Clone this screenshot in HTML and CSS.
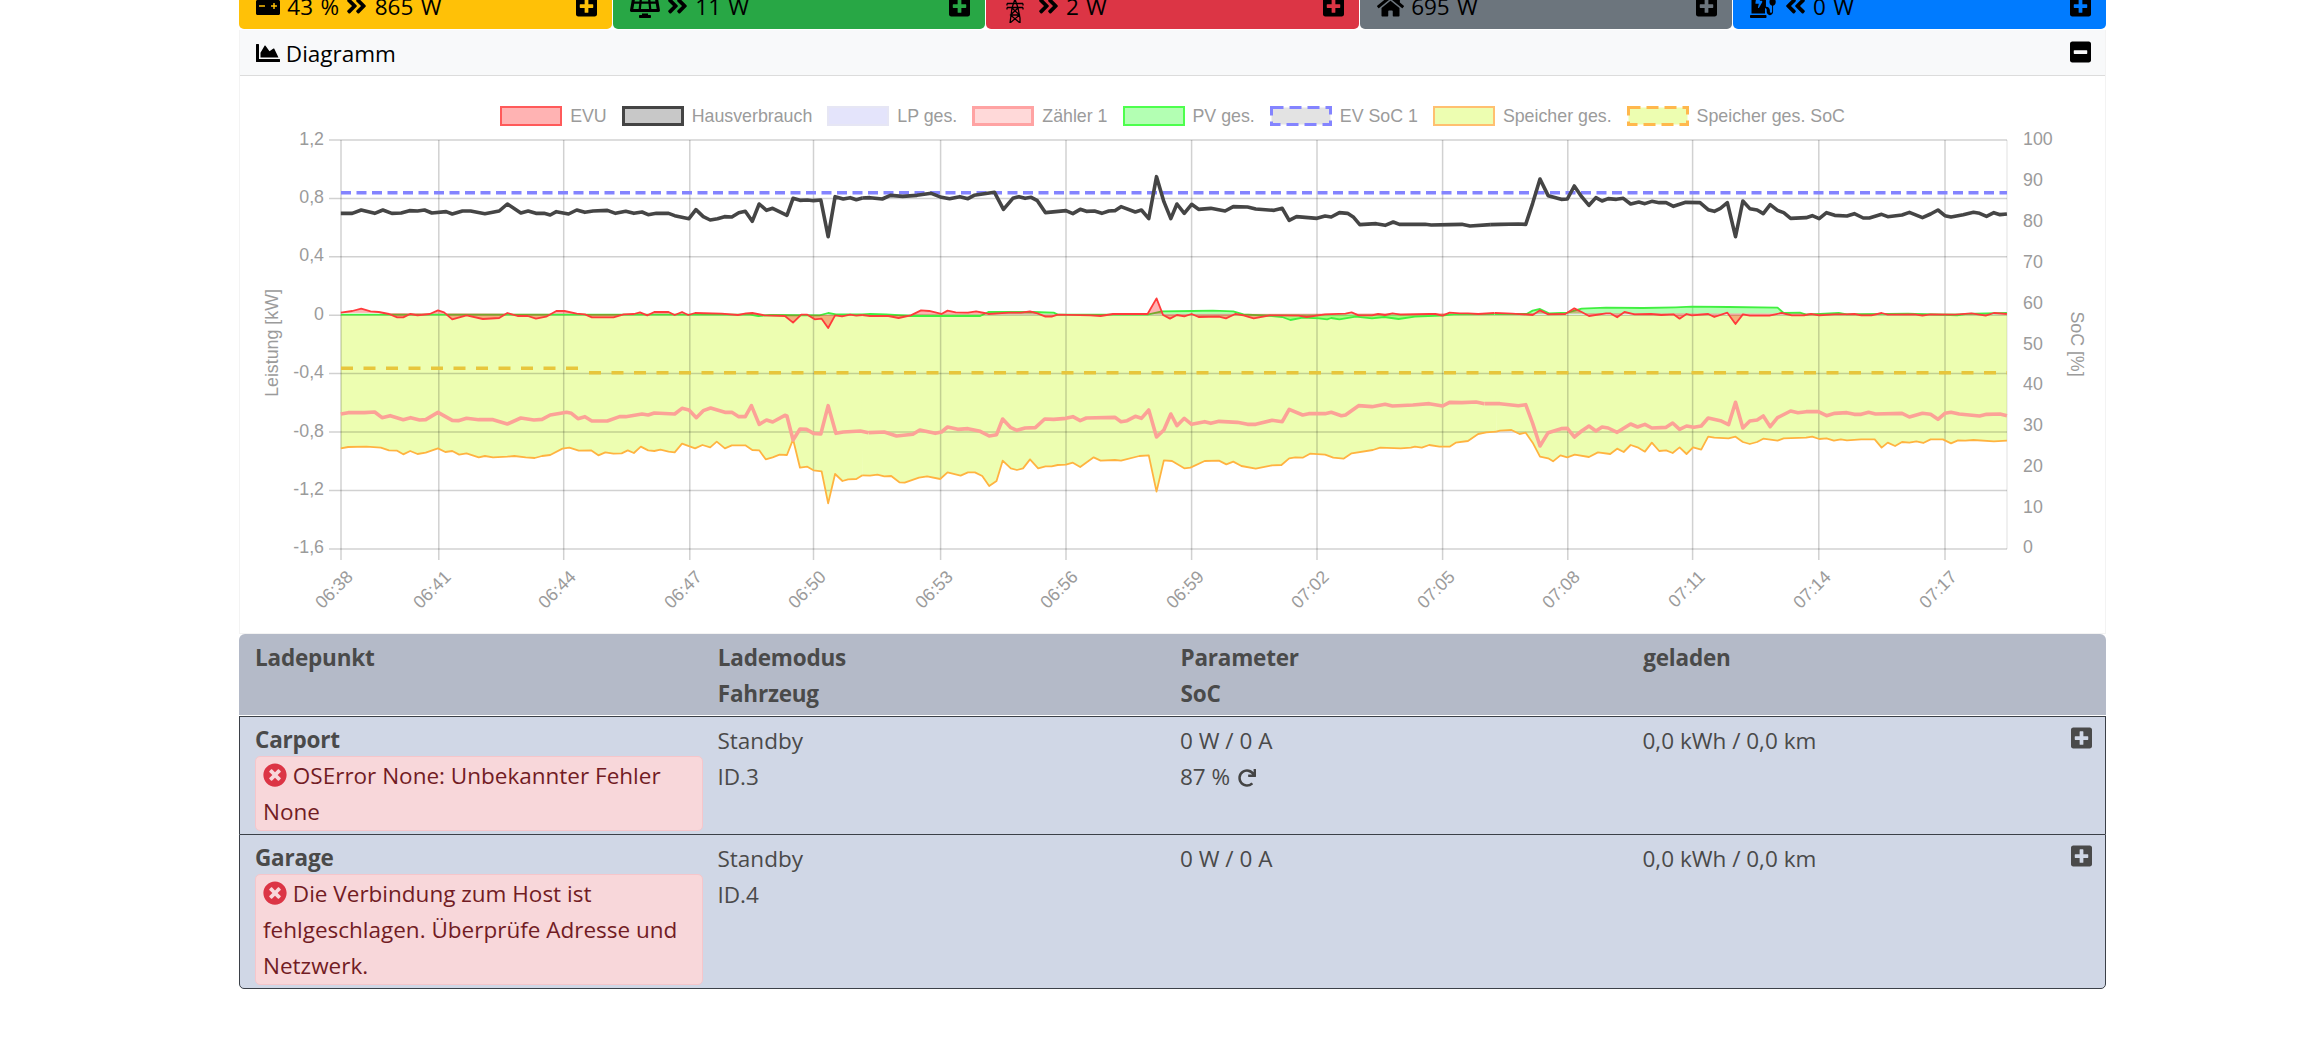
FILE: index.html
```html
<!DOCTYPE html>
<html lang="de">
<head>
<meta charset="utf-8">
<title>openWB</title>
<link rel="stylesheet" href="styles.css">
</head>
<body>
<div class="page">
  <div class="bars">
    <div class="bar bar-yellow">
      <span><svg class="fa" viewBox="0 0 512 512"><path d="M480 128h-32V80c0-8.84-7.16-16-16-16h-96c-8.84 0-16 7.16-16 16v48H192V80c0-8.84-7.16-16-16-16H80c-8.84 0-16 7.16-16 16v48H32c-17.67 0-32 14.33-32 32v256c0 17.67 14.33 32 32 32h448c17.67 0 32-14.33 32-32V160c0-17.67-14.33-32-32-32zM192 264c0 4.42-3.58 8-8 8H72c-4.42 0-8-3.58-8-8v-16c0-4.42 3.58-8 8-8h112c4.42 0 8 3.58 8 8v16zm256 0c0 4.42-3.58 8-8 8h-40v40c0 4.42-3.58 8-8 8h-16c-4.42 0-8-3.58-8-8v-40h-40c-4.42 0-8-3.58-8-8v-16c0-4.42 3.58-8 8-8h40v-40c0-4.42 3.58-8 8-8h16c4.42 0 8 3.58 8 8v40h40c4.42 0 8 3.58 8 8v16z"/></svg> 43 % <svg class="fa" viewBox="0 0 448 512"><path d="M224.3 273l-136 136c-9.4 9.4-24.6 9.4-33.9 0l-22.6-22.6c-9.4-9.4-9.4-24.6 0-33.9l96.4-96.4-96.4-96.4c-9.4-9.4-9.4-24.6 0-33.9L54.3 103c9.4-9.4 24.6-9.4 33.9 0l136 136c9.5 9.4 9.5 24.6.1 34zm192-34l-136-136c-9.4-9.4-24.6-9.4-33.9 0l-22.6 22.6c-9.4 9.4-9.4 24.6 0 33.9l96.4 96.4-96.4 96.4c-9.4 9.4-9.4 24.6 0 33.9l22.6 22.6c9.4 9.4 24.6 9.4 33.9 0l136-136c9.4-9.2 9.4-24.4 0-33.8z"/></svg> 865 W</span>
      <svg class="fa fa-end" viewBox="0 0 448 512"><path d="M400 32H48C21.5 32 0 53.5 0 80v352c0 26.5 21.5 48 48 48h352c26.5 0 48-21.5 48-48V80c0-26.5-21.5-48-48-48zm-32 252c0 6.6-5.4 12-12 12h-92v92c0 6.6-5.4 12-12 12h-56c-6.6 0-12-5.4-12-12v-92H92c-6.6 0-12-5.4-12-12v-56c0-6.6 5.4-12 12-12h92v-92c0-6.6 5.4-12 12-12h56c6.6 0 12 5.4 12 12v92h92c6.6 0 12 5.4 12 12v56z"/></svg>
    </div>
    <div class="bar bar-green">
      <span><svg class="fa" viewBox="0 0 640 512"><path d="M431.98 448.01l-47.97.05V416h-128v32.21l-47.98.05c-8.82.01-15.97 7.16-15.98 15.99l-.05 31.73c-.01 8.85 7.17 16.03 16.02 16.02l223.96-.26c8.82-.01 15.97-7.16 15.98-15.98l.04-31.73c.01-8.85-7.17-16.03-16.02-16.02zM585.2 26.74C582.58 11.31 568.99 0 553.06 0H86.93C71 0 57.41 11.31 54.79 26.74-3.32 369.16.04 348.08.03 352c-.03 17.32 14.29 32 32.6 32h574.74c18.23 0 32.51-14.56 32.59-31.79.02-4.08 3.35 16.95-54.76-325.47zM259.83 64h120.33l9.77 96H250.06l9.77-96zm-75.17 256H71.09L90.1 208h105.97l-11.41 112zm16.29-160H98.24l16.29-96h96.19l-9.77 96zm32.82 160l11.4-112h149.65l11.4 112H233.77zm195.3-256h96.19l16.29 96H439.04l-9.77-96zm26.06 256l-11.4-112H549.9l19 112H455.33z"/></svg> <svg class="fa" viewBox="0 0 448 512"><path d="M224.3 273l-136 136c-9.4 9.4-24.6 9.4-33.9 0l-22.6-22.6c-9.4-9.4-9.4-24.6 0-33.9l96.4-96.4-96.4-96.4c-9.4-9.4-9.4-24.6 0-33.9L54.3 103c9.4-9.4 24.6-9.4 33.9 0l136 136c9.5 9.4 9.5 24.6.1 34zm192-34l-136-136c-9.4-9.4-24.6-9.4-33.9 0l-22.6 22.6c-9.4 9.4-9.4 24.6 0 33.9l96.4 96.4-96.4 96.4c-9.4 9.4-9.4 24.6 0 33.9l22.6 22.6c9.4 9.4 24.6 9.4 33.9 0l136-136c9.4-9.2 9.4-24.4 0-33.8z"/></svg> 11 W</span>
      <svg class="fa fa-end" viewBox="0 0 448 512"><path d="M400 32H48C21.5 32 0 53.5 0 80v352c0 26.5 21.5 48 48 48h352c26.5 0 48-21.5 48-48V80c0-26.5-21.5-48-48-48zm-32 252c0 6.6-5.4 12-12 12h-92v92c0 6.6-5.4 12-12 12h-56c-6.6 0-12-5.4-12-12v-92H92c-6.6 0-12-5.4-12-12v-56c0-6.6 5.4-12 12-12h92v-92c0-6.6 5.4-12 12-12h56c6.6 0 12 5.4 12 12v92h92c6.6 0 12 5.4 12 12v56z"/></svg>
    </div>
    <div class="bar bar-red">
      <span><svg class="pylon" viewBox="0 0 18 24"><path d="M9 0L6 9 4 24M9 0l3 9 2 10 0 5M1 4.500h16M1 8.500h16M1 4.500v2M17 4.500v2M1 8.500v2M17 8.500v2M6 9l7.500 7L4 24M12 9l-7.500 7L14 24M5 16h8"/></svg> <svg class="fa" viewBox="0 0 448 512"><path d="M224.3 273l-136 136c-9.4 9.4-24.6 9.4-33.9 0l-22.6-22.6c-9.4-9.4-9.4-24.6 0-33.9l96.4-96.4-96.4-96.4c-9.4-9.4-9.4-24.6 0-33.9L54.3 103c9.4-9.4 24.6-9.4 33.9 0l136 136c9.5 9.4 9.5 24.6.1 34zm192-34l-136-136c-9.4-9.4-24.6-9.4-33.9 0l-22.6 22.6c-9.4 9.4-9.4 24.6 0 33.9l96.4 96.4-96.4 96.4c-9.4 9.4-9.4 24.6 0 33.9l22.6 22.6c9.4 9.4 24.6 9.4 33.9 0l136-136c9.4-9.2 9.4-24.4 0-33.8z"/></svg> 2 W</span>
      <svg class="fa fa-end" viewBox="0 0 448 512"><path d="M400 32H48C21.5 32 0 53.5 0 80v352c0 26.5 21.5 48 48 48h352c26.5 0 48-21.5 48-48V80c0-26.5-21.5-48-48-48zm-32 252c0 6.6-5.4 12-12 12h-92v92c0 6.6-5.4 12-12 12h-56c-6.6 0-12-5.4-12-12v-92H92c-6.6 0-12-5.4-12-12v-56c0-6.6 5.4-12 12-12h92v-92c0-6.6 5.4-12 12-12h56c6.6 0 12 5.4 12 12v92h92c6.6 0 12 5.4 12 12v56z"/></svg>
    </div>
    <div class="bar bar-grey">
      <span><svg class="fa" viewBox="0 0 576 512"><path d="M280.37 148.26L96 300.11V464a16 16 0 0 0 16 16l112.06-.29a16 16 0 0 0 15.92-16V368a16 16 0 0 1 16-16h64a16 16 0 0 1 16 16v95.64a16 16 0 0 0 16 16.05L464 480a16 16 0 0 0 16-16V300L295.67 148.26a12.19 12.19 0 0 0-15.3 0zM571.6 251.47L488 182.56V44.05a12 12 0 0 0-12-12h-56a12 12 0 0 0-12 12v72.61L318.47 43a48 48 0 0 0-61 0L4.34 251.47a12 12 0 0 0-1.6 16.9l25.5 31A12 12 0 0 0 45.15 301l235.22-193.74a12.19 12.19 0 0 1 15.3 0L530.9 301a12 12 0 0 0 16.9-1.6l25.5-31a12 12 0 0 0-1.7-16.93z"/></svg> 695 W</span>
      <svg class="fa fa-end" viewBox="0 0 448 512"><path d="M400 32H48C21.5 32 0 53.5 0 80v352c0 26.5 21.5 48 48 48h352c26.5 0 48-21.5 48-48V80c0-26.5-21.5-48-48-48zm-32 252c0 6.6-5.4 12-12 12h-92v92c0 6.6-5.4 12-12 12h-56c-6.6 0-12-5.4-12-12v-92H92c-6.6 0-12-5.4-12-12v-56c0-6.6 5.4-12 12-12h92v-92c0-6.6 5.4-12 12-12h56c6.6 0 12 5.4 12 12v92h92c6.6 0 12 5.4 12 12v56z"/></svg>
    </div>
    <div class="bar bar-blue">
      <span><svg class="fa" viewBox="0 0 576 512"><path d="M336 448H16c-8.8 0-16 7.2-16 16v32c0 8.800 7.200 16 16 16h320c8.800 0 16-7.200 16-16v-32c0-8.800-7.200-16-16-16zm208-320V80c0-8.800-7.200-16-16-16s-16 7.200-16 16v48h-32V80c0-8.800-7.200-16-16-16s-16 7.200-16 16v48h-16c-8.800 0-16 7.200-16 16v32c0 35.800 23.500 66.100 56 76.300V376c0 13.200-10.800 24-24 24s-24-10.800-24-24v-28c0-42.500-34.500-77-77-77h-7V64c0-35.300-28.700-64-64-64H96C60.700 0 32 28.700 32 64v352h288V304h7c15.500 0 29 12.500 29 44v32c0 37.500 31.500 75 72 72 36.500-2.700 64-34.500 64-72V252.300c32.500-10.200 56-40.500 56-76.300v-32c0-8.800-7.200-16-16-16zM260 175l-67.200 117.900c-2.100 3.700-6.100 5.900-10.200 5.900-7.600 0-13.300-7.100-11.500-14.500L188 208h-60c-7.300 0-12.900-6.500-12-13.700l16-120c.8-6 5.900-10.300 11.900-10.300h72c7.800 0 13.500 7.300 11.600 14.900L208 144h42c9.200 0 15 10.100 10 19.300z"/></svg> <svg class="fa" viewBox="0 0 448 512"><path d="M223.7 239l136-136c9.400-9.400 24.600-9.400 33.900 0l22.600 22.600c9.400 9.400 9.400 24.600 0 33.900L319.900 256l96.400 96.400c9.400 9.400 9.400 24.600 0 33.900L393.700 409c-9.400 9.400-24.600 9.400-33.900 0l-136-136c-9.500-9.400-9.500-24.600-.1-34zm-192 34l136 136c9.400 9.400 24.600 9.400 33.900 0l22.600-22.600c9.400-9.400 9.400-24.600 0-33.900L127.900 256l96.400-96.400c9.400-9.400 9.400-24.600 0-33.900L201.700 103c-9.400-9.400-24.600-9.400-33.900 0l-136 136c-9.500 9.400-9.500 24.600-.1 34z"/></svg> 0 W</span>
      <svg class="fa fa-end" viewBox="0 0 448 512"><path d="M400 32H48C21.5 32 0 53.5 0 80v352c0 26.5 21.5 48 48 48h352c26.5 0 48-21.5 48-48V80c0-26.5-21.5-48-48-48zm-32 252c0 6.6-5.4 12-12 12h-92v92c0 6.6-5.4 12-12 12h-56c-6.6 0-12-5.4-12-12v-92H92c-6.6 0-12-5.4-12-12v-56c0-6.6 5.4-12 12-12h92v-92c0-6.6 5.4-12 12-12h56c6.6 0 12 5.4 12 12v92h92c6.6 0 12 5.4 12 12v56z"/></svg>
    </div>
  </div>

  <section class="card">
    <header class="card-head">
      <span><svg class="fa" viewBox="0 0 512 512"><path d="M500 384c6.600 0 12 5.400 12 12v40c0 6.600-5.400 12-12 12H12c-6.600 0-12-5.400-12-12V76c0-6.600 5.400-12 12-12h40c6.600 0 12 5.400 12 12v308h436zM372.700 159.500L288 216l-85.300-113.700c-5.100-6.800-15.500-6.300-19.900 1L96 248v104h384l-89.900-187.800c-3.200-6.500-11.400-8.700-17.400-4.700z"/></svg> Diagramm</span>
      <svg class="fa fa-end" viewBox="0 0 448 512"><path d="M400 32H48C21.500 32 0 53.500 0 80v352c0 26.500 21.500 48 48 48h352c26.500 0 48-21.500 48-48V80c0-26.500-21.500-48-48-48zM92 296c-6.600 0-12-5.400-12-12v-56c0-6.600 5.400-12 12-12h264c6.600 0 12 5.400 12 12v56c0 6.600-5.400 12-12 12H92z"/></svg>
    </header>
    <div class="card-body">
      <ul class="legend">
        <li class="legend-item"><span class="swatch sw-evu"></span>EVU</li>
        <li class="legend-item"><span class="swatch sw-haus"></span>Hausverbrauch</li>
        <li class="legend-item"><span class="swatch sw-lp"></span>LP ges.</li>
        <li class="legend-item"><span class="swatch sw-zaehler"></span>Zähler 1</li>
        <li class="legend-item"><span class="swatch sw-pv"></span>PV ges.</li>
        <li class="legend-item"><svg class="swatch-svg" viewBox="0 0 62 20"><rect class="sw-dash-ev" x="1.500" y="1.500" width="59" height="17"/></svg>EV SoC 1</li>
        <li class="legend-item"><span class="swatch sw-speicher"></span>Speicher ges.</li>
        <li class="legend-item"><svg class="swatch-svg" viewBox="0 0 62 20"><rect class="sw-dash-sp" x="1.500" y="1.500" width="59" height="17"/></svg>Speicher ges. SoC</li>
      </ul>
      <svg class="chart" viewBox="240 130 1865 500" width="1865" height="500">
        <!-- Speicher fill -->
        <g class="fill-yellow">
          <g transform="translate(240 400) scale(.40816 .33333)"><polygon points="247,-255 247,145 265,141 310,140 345,143 365,151 385,152 400,163 417,153 435,162 455,158 485,145 503,156 520,153 537,164 555,160 585,172 600,168 620,172 655,170 672,168 700,172 722,174 740,168 760,165 790,146 807,143 830,152 860,151 878,166 895,157 915,161 935,160 950,151 965,159 982,140 1000,151 1015,153 1030,149 1050,155 1065,157 1083,131 1115,145 1133,135 1152,142 1168,125 1188,145 1205,136 1238,136 1255,150 1272,151 1288,178 1305,172 1322,164 1340,165 1355,118 1372,203 1390,200 1405,211 1425,214 1441,310 1458,222 1476,243 1490,238 1510,237 1525,226 1530,-255"/></g>
          <g transform="translate(870 400) scale(.40816 .33333)"><polygon points="-22,-255 -19,226 0,227 18,224 35,229 52,228 72,247 85,248 120,233 140,229 172,237 190,217 222,227 240,217 257,217 275,228 292,258 310,243 325,182 345,205 360,210 375,205 392,178 412,205 430,199 445,199 460,195 480,194 497,188 515,201 548,172 565,182 600,180 615,182 660,168 683,166 702,275 720,181 740,183 770,205 785,203 820,183 855,182 873,193 890,185 910,198 945,206 985,196 1008,195 1027,175 1042,172 1060,173 1078,161 1115,164 1135,173 1160,176 1180,160 1232,150 1250,143 1300,145 1325,143 1335,140 1352,143 1370,135 1395,140 1420,140 1435,128 1465,123 1490,102 1510,97 1535,95 1538,-255"/></g>
          <g transform="translate(1500 400) scale(.40816 .33333)"><polygon points="-12,-255 -9,95 0,92 28,90 48,102 63,98 80,128 98,170 118,175 130,184 148,166 165,172 183,164 218,171 240,157 270,162 287,146 303,156 320,135 337,142 355,155 372,128 390,153 407,151 423,159 440,142 457,162 473,142 493,149 510,110 525,113 560,115 577,110 595,126 612,132 630,126 645,116 680,122 695,115 750,113 765,110 782,117 800,115 818,122 835,118 850,121 885,118 918,118 935,143 950,128 968,138 985,126 1003,128 1020,124 1037,129 1055,118 1085,118 1105,130 1122,121 1140,122 1160,120 1210,124 1242,122 1242,-255"/></g>
        </g>
        <!-- grid -->
        <g class="grid">
          <path d="M329 140H2007M329 198.400H2007M329 256.800H2007M329 315.200H2007M329 373.600H2007M329 432H2007M329 490.400H2007M329 549H2007"/>
          <path d="M341 140V560M438.800 140V560M563.700 140V560M689.800 140V560M813.500 140V560M940.600 140V560M1066 140V560M1191.600 140V560M1317 140V560M1442.600 140V560M1567.800 140V560M1692.600 140V560M1818.800 140V560M1945 140V560"/>
          <path class="grid-right" d="M2007 140V549"/>
        </g>
        <!-- PV -->
        <g class="s-pv">
          <polyline transform="translate(240 130) scale(.40816 .33333)" points="247,554 1250,554 1270,558 1300,555 1420,556 1441,549 1460,553 1525,553"/>
          <polyline transform="translate(870 130) scale(.40816 .33333)" points="-19,553 0,552 40,553 100,558 270,558 290,546 345,546 400,546 450,548 460,554 680,554 715,544 790,543 840,542 890,544 915,553 985,558 1010,561 1030,570 1060,563 1100,565 1120,568 1130,564 1150,568 1190,560 1230,565 1260,561 1295,567 1335,560 1400,557 1430,553 1530,552"/>
          <polyline transform="translate(1500 130) scale(.40816 .33333)" points="-13,552 65,552 80,542 98,537 120,550 165,548 200,536 260,533 350,534 430,532 470,530 560,531 680,533 695,549 735,548 750,554 830,549 850,553 1000,551 1120,556 1140,552 1242,549"/>
        </g>
        <!-- EVU -->
        <g class="s-evu">
          <polyline transform="translate(240 130) scale(.40816 .33333)" points="247,548 275,543 297,536 320,544 340,546 365,552 385,562 400,562 417,552 435,556 465,552 485,541 500,547 520,568 555,556 595,567 635,564 655,549 680,558 705,558 725,566 750,560 775,543 795,543 825,551 845,553 862,562 915,562 940,553 965,552 980,547 998,556 1015,546 1050,546 1065,555 1083,546 1098,555 1115,549 1180,551 1220,555 1240,550 1255,549 1285,556 1335,558 1355,578 1375,554 1390,554 1408,568 1425,566 1441,594 1458,556 1475,559 1495,554 1510,557 1525,555"/>
          <polyline transform="translate(870 130) scale(.40816 .33333)" points="-19,555 0,558 30,558 45,558 70,564 100,556 125,541 145,543 175,552 190,542 210,547 240,548 260,544 280,549 290,552 340,548 370,548 392,544 410,550 430,560 445,560 460,554 540,556 565,558 595,552 680,552 702,505 718,555 735,566 752,555 770,559 788,552 805,561 855,560 872,565 895,552 915,556 940,565 980,556 1050,557 1070,561 1115,553 1165,551 1180,547 1197,556 1230,556 1245,552 1262,555 1280,550 1300,554 1370,552 1385,552 1403,557 1420,548 1445,550 1465,550 1490,552 1530,549"/>
          <polyline transform="translate(1500 130) scale(.40816 .33333)" points="-13,549 30,551 80,555 98,541 118,553 160,552 182,535 200,546 218,558 260,550 270,550 287,562 305,546 330,553 370,552 395,555 425,553 440,566 457,552 470,556 510,552 525,561 557,548 577,582 595,553 612,557 660,557 690,549 715,556 745,556 762,552 782,556 820,553 850,553 868,552 885,556 910,556 935,549 950,554 1015,553 1035,557 1055,553 1115,554 1155,550 1190,557 1210,549 1242,552"/>
        </g>
        <!-- Speicher SoC dashed -->
        <path class="s-socsp" d="M341 368.300H581M589 372.700H2007"/>
        <!-- EV SoC dashed -->
        <path class="s-socev" d="M341 192.700H2007"/>
        <!-- Speicher line -->
        <g class="s-sp">
          <polyline transform="translate(240 400) scale(.40816 .33333)" points="247,145 265,141 310,140 345,143 365,151 385,152 400,163 417,153 435,162 455,158 485,145 503,156 520,153 537,164 555,160 585,172 600,168 620,172 655,170 672,168 700,172 722,174 740,168 760,165 790,146 807,143 830,152 860,151 878,166 895,157 915,161 935,160 950,151 965,159 982,140 1000,151 1015,153 1030,149 1050,155 1065,157 1083,131 1115,145 1133,135 1152,142 1168,125 1188,145 1205,136 1238,136 1255,150 1272,151 1288,178 1305,172 1322,164 1340,165 1355,118 1372,203 1390,200 1405,211 1425,214 1441,310 1458,222 1476,243 1490,238 1510,237 1525,226"/>
          <polyline transform="translate(870 400) scale(.40816 .33333)" points="-19,226 0,227 18,224 35,229 52,228 72,247 85,248 120,233 140,229 172,237 190,217 222,227 240,217 257,217 275,228 292,258 310,243 325,182 345,205 360,210 375,205 392,178 412,205 430,199 445,199 460,195 480,194 497,188 515,201 548,172 565,182 600,180 615,182 660,168 683,166 702,275 720,181 740,183 770,205 785,203 820,183 855,182 873,193 890,185 910,198 945,206 985,196 1008,195 1027,175 1042,172 1060,173 1078,161 1115,164 1135,173 1160,176 1180,160 1232,150 1250,143 1300,145 1325,143 1335,140 1352,143 1370,135 1395,140 1420,140 1435,128 1465,123 1490,102 1510,97 1535,95"/>
          <polyline transform="translate(1500 400) scale(.40816 .33333)" points="-9,95 0,92 28,90 48,102 63,98 80,128 98,170 118,175 130,184 148,166 165,172 183,164 218,171 240,157 270,162 287,146 303,156 320,135 337,142 355,155 372,128 390,153 407,151 423,159 440,142 457,162 473,142 493,149 510,110 525,113 560,115 577,110 595,126 612,132 630,126 645,116 680,122 695,115 750,113 765,110 782,117 800,115 818,122 835,118 850,121 885,118 918,118 935,143 950,128 968,138 985,126 1003,128 1020,124 1037,129 1055,118 1085,118 1105,130 1122,121 1140,122 1160,120 1210,124 1242,122"/>
        </g>
        <!-- Zaehler line -->
        <g class="s-z">
          <polyline transform="translate(240 400) scale(.40816 .33333)" points="247,42 265,38 305,38 330,36 348,53 368,47 400,59 418,53 440,60 455,59 485,37 520,61 535,62 555,55 585,59 620,59 655,72 688,54 720,60 740,58 760,45 800,37 812,40 828,56 845,50 862,63 900,63 930,50 945,50 985,42 1000,45 1015,39 1065,42 1083,25 1100,30 1118,53 1135,32 1153,24 1188,37 1205,37 1222,50 1238,50 1253,17 1272,73 1290,60 1305,66 1335,46 1340,48 1355,120 1372,87 1388,88 1405,100 1423,102 1441,17 1460,100 1478,96 1520,93 1540,98"/>
          <polyline transform="translate(870 400) scale(.40816 .33333)" points="-3,98 35,96 65,108 105,103 122,90 160,100 175,96 190,81 215,88 240,86 270,94 292,108 310,104 325,57 345,83 360,91 380,84 405,83 428,57 450,58 480,55 497,50 515,62 530,54 600,52 615,65 630,62 650,49 665,55 683,30 702,111 720,90 737,42 752,77 770,55 788,73 820,65 835,70 855,64 900,67 925,73 945,73 985,61 1010,65 1027,28 1060,45 1075,41 1115,41 1130,37 1155,47 1165,45 1197,17 1230,20 1262,13 1280,18 1330,15 1370,11 1403,18 1420,7 1450,8 1485,6 1505,11"/>
          <polyline transform="translate(1500 400) scale(.40816 .33333)" points="-38,11 0,11 45,17 63,14 80,70 98,138 118,98 150,86 165,85 182,111 200,93 218,78 235,93 250,81 265,84 287,97 320,72 337,81 355,73 372,84 407,82 423,69 440,88 457,78 475,82 493,78 510,54 540,62 560,74 577,7 595,84 612,63 630,60 645,48 662,80 680,53 712,33 730,38 750,35 780,35 800,47 820,40 850,38 868,43 885,43 903,37 920,42 985,40 1003,51 1035,40 1055,43 1073,58 1090,40 1105,37 1125,42 1175,48 1192,43 1225,42 1242,47"/>
        </g>
        <!-- Hausverbrauch line -->
        <g class="s-h">
          <polyline transform="translate(240 130) scale(.40816 .33333)" points="247,250 275,250 297,240 330,250 350,240 372,250 395,249 415,242 435,243 452,240 470,249 505,245 520,252 545,243 565,243 600,251 635,243 655,222 688,249 706,243 725,250 745,250 760,255 775,245 805,252 825,240 845,247 865,243 900,241 920,250 945,244 965,250 985,246 1000,254 1020,250 1050,250 1065,257 1100,266 1117,239 1135,260 1152,270 1170,266 1187,260 1205,261 1222,248 1238,244 1255,274 1272,222 1290,241 1305,235 1340,256 1355,205 1372,211 1390,210 1405,212 1423,210 1441,320 1458,200 1478,207 1495,203 1510,209 1525,204"/>
          <polyline transform="translate(870 130) scale(.40816 .33333)" points="-19,204 0,203 30,207 50,196 80,199 115,196 150,190 175,202 195,206 220,200 240,206 255,196 305,187 327,238 350,205 365,200 380,205 395,202 410,212 430,248 480,242 497,251 515,238 530,244 550,243 568,250 585,243 600,242 615,230 650,246 665,240 683,266 702,140 720,215 737,266 752,222 770,250 788,223 805,238 835,235 870,243 890,230 925,231 945,237 990,241 1010,235 1027,271 1045,260 1095,265 1115,258 1130,261 1150,248 1170,250 1185,262 1200,284 1240,281 1262,286 1282,276 1297,283 1360,283 1375,285 1420,284 1450,283 1470,288 1520,284"/>
          <polyline transform="translate(1500 130) scale(.40816 .33333)" points="-24,284 0,283 45,282 63,283 80,220 98,147 118,197 150,208 165,207 182,168 200,200 218,226 235,203 250,213 265,206 285,208 302,205 320,222 340,216 355,221 372,214 390,218 407,218 425,229 455,217 490,218 510,239 525,244 540,235 557,218 577,320 595,213 612,236 630,240 645,251 662,224 680,241 695,248 712,265 750,263 765,257 782,266 800,248 820,256 850,258 868,251 890,264 905,264 935,253 950,260 985,255 1003,247 1035,263 1055,252 1073,240 1090,257 1105,261 1135,254 1160,247 1175,250 1192,259 1210,248 1225,254 1242,252"/>
        </g>
        <!-- axis labels -->
        <g class="tick tick-left">
          <text x="324" y="145">1,2</text>
          <text x="324" y="203">0,8</text>
          <text x="324" y="261">0,4</text>
          <text x="324" y="319.500">0</text>
          <text x="324" y="378">-0,4</text>
          <text x="324" y="436.500">-0,8</text>
          <text x="324" y="495">-1,2</text>
          <text x="324" y="553">-1,6</text>
        </g>
        <g class="tick">
          <text x="2023" y="145">100</text>
          <text x="2023" y="186">90</text>
          <text x="2023" y="227">80</text>
          <text x="2023" y="268">70</text>
          <text x="2023" y="309">60</text>
          <text x="2023" y="349.500">50</text>
          <text x="2023" y="390">40</text>
          <text x="2023" y="431">30</text>
          <text x="2023" y="472">20</text>
          <text x="2023" y="513">10</text>
          <text x="2023" y="553">0</text>
        </g>
        <g class="tick tick-x">
          <text transform="translate(354 578) rotate(-45)">06:38</text>
          <text transform="translate(452 578) rotate(-45)">06:41</text>
          <text transform="translate(577 578) rotate(-45)">06:44</text>
          <text transform="translate(703 578) rotate(-45)">06:47</text>
          <text transform="translate(827 578) rotate(-45)">06:50</text>
          <text transform="translate(954 578) rotate(-45)">06:53</text>
          <text transform="translate(1079 578) rotate(-45)">06:56</text>
          <text transform="translate(1205 578) rotate(-45)">06:59</text>
          <text transform="translate(1330 578) rotate(-45)">07:02</text>
          <text transform="translate(1456 578) rotate(-45)">07:05</text>
          <text transform="translate(1581 578) rotate(-45)">07:08</text>
          <text transform="translate(1706 578) rotate(-45)">07:11</text>
          <text transform="translate(1832 578) rotate(-45)">07:14</text>
          <text transform="translate(1958 578) rotate(-45)">07:17</text>
        </g>
        <g class="tick tick-title">
          <text transform="translate(278 343) rotate(-90)">Leistung [kW]</text>
          <text transform="translate(2071 344) rotate(90)">SoC [%]</text>
        </g>
      </svg>
    </div>
  </section>

  <section class="lp">
    <div class="lp-head cols">
      <div>Ladepunkt</div>
      <div>Lademodus<br>Fahrzeug</div>
      <div>Parameter<br>SoC</div>
      <div>geladen</div>
    </div>
    <div class="lp-row cols">
      <div class="lp-name">
        <div class="name">Carport</div>
        <div class="alert"><svg class="fa fa-err" viewBox="0 0 512 512"><path d="M256 8C119 8 8 119 8 256s111 248 248 248 248-111 248-248S393 8 256 8zm121.600 313.100c4.700 4.700 4.700 12.300 0 17L338 377.600c-4.700 4.700-12.300 4.700-17 0L256 312l-65.100 65.600c-4.700 4.700-12.300 4.700-17 0L134.400 338c-4.700-4.700-4.700-12.300 0-17l65.600-65-65.600-65.100c-4.700-4.700-4.700-12.300 0-17l39.600-39.600c4.700-4.700 12.300-4.700 17 0l65 65.700 65.100-65.600c4.700-4.700 12.300-4.700 17 0l39.600 39.600c4.700 4.700 4.700 12.300 0 17L312 256l65.600 65.100z"/></svg> OSError None: Unbekannter Fehler None</div>
      </div>
      <div>Standby<br>ID.3</div>
      <div>0 W / 0 A<br>87 % <svg class="fa-redo" viewBox="0 0 512 512"><path d="M500.330 0h-47.410a12 12 0 0 0-12 12.570l4 82.760A247.420 247.420 0 0 0 256 8C119.340 8 7.900 119.530 8 256.190 8.100 393.070 119.100 504 256 504a247.100 247.100 0 0 0 166.180-63.910 12 12 0 0 0 .48-17.430l-34-34a12 12 0 0 0-16.380-.55A176 176 0 1 1 402.100 157.800l-101.530-4.870a12 12 0 0 0-12.570 12v47.410a12 12 0 0 0 12 12h200.330a12 12 0 0 0 12-12V12a12 12 0 0 0-12-12z"/></svg></div>
      <div class="lp-last"><span>0,0 kWh / 0,0 km</span><svg class="fa fa-row" viewBox="0 0 448 512"><path d="M400 32H48C21.500 32 0 53.500 0 80v352c0 26.500 21.500 48 48 48h352c26.500 0 48-21.500 48-48V80c0-26.500-21.500-48-48-48zm-32 252c0 6.600-5.400 12-12 12h-92v92c0 6.600-5.400 12-12 12h-56c-6.600 0-12-5.400-12-12v-92H92c-6.600 0-12-5.400-12-12v-56c0-6.600 5.400-12 12-12h92v-92c0-6.600 5.400-12 12-12h56c6.600 0 12 5.400 12 12v92h92c6.600 0 12 5.400 12 12v56z"/></svg></div>
    </div>
    <div class="lp-row lp-row-last cols">
      <div class="lp-name">
        <div class="name">Garage</div>
        <div class="alert"><svg class="fa fa-err" viewBox="0 0 512 512"><path d="M256 8C119 8 8 119 8 256s111 248 248 248 248-111 248-248S393 8 256 8zm121.600 313.100c4.700 4.700 4.700 12.300 0 17L338 377.600c-4.700 4.700-12.300 4.700-17 0L256 312l-65.100 65.600c-4.700 4.700-12.300 4.700-17 0L134.400 338c-4.700-4.700-4.700-12.300 0-17l65.600-65-65.600-65.100c-4.700-4.700-4.700-12.300 0-17l39.600-39.600c4.700-4.700 12.300-4.700 17 0l65 65.700 65.100-65.600c4.700-4.700 12.300-4.700 17 0l39.600 39.600c4.700 4.700 4.700 12.300 0 17L312 256l65.600 65.100z"/></svg> Die Verbindung zum Host ist fehlgeschlagen. Überprüfe Adresse und Netzwerk.</div>
      </div>
      <div>Standby<br>ID.4</div>
      <div>0 W / 0 A</div>
      <div class="lp-last"><span>0,0 kWh / 0,0 km</span><svg class="fa fa-row" viewBox="0 0 448 512"><path d="M400 32H48C21.500 32 0 53.500 0 80v352c0 26.500 21.500 48 48 48h352c26.500 0 48-21.500 48-48V80c0-26.500-21.500-48-48-48zm-32 252c0 6.600-5.400 12-12 12h-92v92c0 6.600-5.400 12-12 12h-56c-6.600 0-12-5.400-12-12v-92H92c-6.600 0-12-5.400-12-12v-56c0-6.600 5.400-12 12-12h92v-92c0-6.600 5.400-12 12-12h56c6.600 0 12 5.400 12 12v92h92c6.600 0 12 5.400 12 12v56z"/></svg></div>
    </div>
  </section>
</div>
</body>
</html>
```
FILE: styles.css
```css
* { box-sizing: border-box; }
html, body { margin: 0; padding: 0; background: #fff; height: 1045px; overflow: hidden; }
body { font-family: "Open Sans", "Liberation Sans", sans-serif; font-size: 22.5px; line-height: 36px; color: #4a4a4a; }
.page { width: 1867px; margin: -16px 0 0 239px; }
.fa { height: 24px; width: auto; vertical-align: -3px; fill: currentColor; }
.fa-end { margin-top: 5px; }
.fa-row { margin-top: 3px; }
.fa-redo { height: 18px; width: 18px; vertical-align: -2px; fill: #444; margin-left: 2px; }
.pylon { height: 24px; width: 18px; margin: 0 6px 0 3px; vertical-align: -8px; fill: none; stroke: #000; stroke-width: 1.300; }

.bars { display: grid; grid-template-columns: repeat(5, 1fr); column-gap: 1px; color: #000; word-spacing: 1.500px; }
.bar { display: flex; justify-content: space-between; align-items: flex-start; height: 45px; padding: 5px 15px 4px 17px; border-radius: 0 0 5px 5px; }
.bar-yellow { background: #ffc107; }
.bar-green { background: #28a745; }
.bar-red { background: #dc3545; }
.bar-grey { background: #6c757d; }
.bar-blue { background: #007bff; }

.card { margin-top: 1px; border: 1px solid #f3f3f3; border-top: 0; }
.card-head { display: flex; justify-content: space-between; align-items: flex-start; height: 46px; padding: 6px 14px 3px 16px; background: #f8f9fa; border-bottom: 1px solid #dcdcdc; color: #000; }
.card-head .fa-end { margin-top: 4px; }
.card-body { padding: 30px 0 3px; }

.legend { display: flex; justify-content: center; gap: 15px; list-style: none; margin: 0 0 4px; padding: 0; height: 20px; font-family: "Liberation Sans", Arial, sans-serif; font-size: 17.800px; line-height: 20px; color: #9b9b9b; }
.legend-item { display: flex; align-items: center; gap: 8px; white-space: nowrap; }
.swatch { display: block; width: 62px; height: 20px; }
.swatch-svg { display: block; width: 62px; height: 20px; }
.sw-evu { background: #ffb3b3; border: 2px solid #ff5a5a; }
.sw-haus { background: #c8c8c8; border: 3px solid #444; }
.sw-lp { background: #e4e4fb; border: 2px solid #e6e6f4; }
.sw-zaehler { background: #ffd9d9; border: 3px solid #ffa3a3; }
.sw-pv { background: #b3ffb3; border: 2px solid #4dff4d; }
.sw-speicher { background: #edfeb1; border: 2px solid #ffc070; }
.sw-dash-ev { fill: #e3e3e3; stroke: #8484ff; stroke-width: 3; stroke-dasharray: 12 6; }
.sw-dash-sp { fill: #edfeb1; stroke: #ffb84d; stroke-width: 3; stroke-dasharray: 12 6; }

.chart { display: block; }
.chart polyline { vector-effect: non-scaling-stroke; }
.fill-yellow { fill: #edfeb1; }
.grid path { fill: none; stroke: rgba(0, 0, 0, .18); stroke-width: 1.500; }
.grid .grid-right { stroke: rgba(0, 0, 0, .08); }
.s-pv polyline { fill: rgba(0, 255, 0, .3); stroke: #40f040; stroke-width: 1.800; stroke-linejoin: round; }
.s-evu polyline { fill: rgba(255, 0, 0, .3); stroke: #ff3b3b; stroke-width: 1.800; stroke-linejoin: round; }
.s-socsp { fill: none; stroke: #e7c63c; stroke-width: 3.500; stroke-dasharray: 12 10.500; }
.s-socev { fill: none; stroke: #8484ff; stroke-width: 3.500; stroke-dasharray: 10 5.500; }
.s-sp polyline { fill: none; stroke: #ffb340; stroke-width: 1.800; stroke-linejoin: round; }
.s-z polyline { fill: none; stroke: #fca297; stroke-width: 3.600; stroke-linejoin: round; }
.s-h polyline { fill: none; stroke: #454545; stroke-width: 3.600; stroke-linejoin: round; }
.tick { font-family: "Liberation Sans", Arial, sans-serif; font-size: 17.800px; fill: #9b9b9b; }
.tick-left { text-anchor: end; }
.tick-x { text-anchor: end; }
.tick-title { text-anchor: middle; }

.cols { display: grid; grid-template-columns: repeat(4, 1fr); }
.lp { color: #4a4a4a; }
.lp-head { height: 81px; padding: 6px 0 0 16px; background: #b4bac8; border-radius: 6px 6px 0 0; font-weight: 700; letter-spacing: -.2px; }
.lp-row { padding: 6px 0 3px 15px; background: #d0d7e6; border: 1px solid #3b4048; border-bottom: 0; }
.lp-head + .lp-row { margin-top: 1px; }
.lp-row-last { border-bottom: 1px solid #3b4048; border-radius: 0 0 5px 5px; }
.lp-name { padding-right: 15px; }
.name { font-weight: 700; line-height: 33px; letter-spacing: -.2px; }
.alert { padding: 1px 7px 0; border: 1px solid #f5c6cb; border-radius: 5px; background: #f8d7da; color: #721c24; }
.fa-err { fill: #dc3545; }
.lp-last { display: flex; justify-content: space-between; align-items: flex-start; padding-right: 13px; }
```
